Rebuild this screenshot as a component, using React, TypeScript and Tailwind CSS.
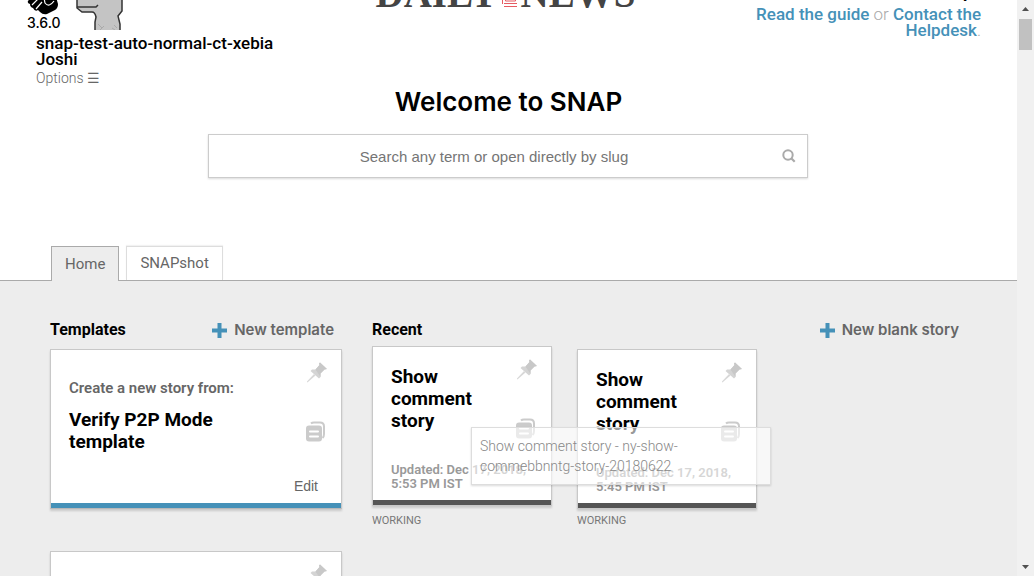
function PinIcon() {
  return (
    <svg viewBox="0 0 22 22" className="h-[22px] w-[22px]" aria-hidden="true">
      <path d="M14 1.500 21 8 18.500 8.500 14.500 12.500 14.500 16 13 17.500 4.500 10 6 8.500 9.500 8.500 13.500 4 13 2.500Z" fill="#d4d4d4" />
      <path d="M14 1.500 21 8 18.500 8.500 14.500 12.500 14.500 16 9.500 8.500 13.500 4 13 2.500Z" fill="#c8c8c8" />
      <path d="M8 13 1 20.500V21.500L2 21 9.500 14.500Z" fill="#d8d8d8" />
    </svg>
  );
}

function CopyIcon() {
  return (
    <svg viewBox="0 0 20 21" className="h-[21px] w-5" aria-hidden="true">
      <path d="M5 2.500Q6 1.500 8 1.500H14Q18 1.500 18 5.500V13Q18 16 16.500 17" fill="none" stroke="#cbcbcb" strokeWidth="2" />
      <rect x="0" y="4.500" width="16" height="16" rx="3" fill="#cbcbcb" />
      <path d="M4 10.500H12M4 15.500H12" stroke="#fff" strokeWidth="2" strokeLinecap="round" />
    </svg>
  );
}

function PlusIcon() {
  return (
    <svg viewBox="0 0 15 15" className="h-[15px] w-[15px]" aria-hidden="true">
      <path d="M7.500 2V13M2 7.500H13" stroke="#4591b8" strokeWidth="4" strokeLinecap="square" />
    </svg>
  );
}

function SearchIcon() {
  return (
    <svg viewBox="0 0 14 14" className="h-3.5 w-3.5 shrink-0" aria-hidden="true">
      <circle cx="6" cy="6" r="4.700" fill="none" stroke="#aaa" strokeWidth="2" />
      <path d="M9.500 9.500 12.700 12.700" stroke="#aaa" strokeWidth="2.200" />
    </svg>
  );
}

function CardActions() {
  return (
    <div className="flex flex-col items-center gap-[38px]">
      <button aria-label="Pin"><PinIcon /></button>
      <button aria-label="Duplicate" className="pr-0.5"><CopyIcon /></button>
    </div>
  );
}

function TemplateCard() {
  return (
    <article className="flex h-40 flex-col border border-[#c8c8c8] border-b-[#b8b8b8] bg-white shadow-[0_2px_2px_rgba(0,0,0,0.15)]">
      <div className="flex flex-1 justify-between pt-[11px] pr-[13px] pl-[18px]">
        <div className="pt-[19px]">
          <p className="text-[15px] leading-4 font-semibold text-[#666]">Create a new story from:</p>
          <h3 className="mt-[13px] w-40 text-[19px] leading-[22px] font-bold">Verify P2P Mode template</h3>
        </div>
        <div className="flex flex-col items-end">
          <CardActions />
          <a href="#edit" className="mt-9 mr-2.5 font-['Liberation_Sans',sans-serif] text-sm leading-4 text-[#666]">Edit</a>
        </div>
      </div>
      <div className="h-[5px] bg-[#4591b8]" />
    </article>
  );
}

function StoryCard({ updated, tip }: { updated: string; tip?: string }) {
  return (
    <div className="w-[180px]">
      <div className={tip ? "relative z-10 -translate-y-[3px]" : "relative"}>
        <article className="flex h-40 flex-col border border-[#c8c8c8] bg-white shadow-[0_2px_2px_rgba(0,0,0,0.15)]">
          <div className="flex justify-between pt-[11px] pr-[13px] pl-[18px]">
            <h3 className="w-24 pt-2 text-[19px] leading-[22px] font-bold">Show comment story</h3>
            <CardActions />
          </div>
          <p className="mt-auto mb-[9px] pr-2 pl-[18px] text-[13px] leading-[14px] font-semibold text-[#999]">{updated}</p>
          <div className="h-[5px] bg-[#555]" />
        </article>
        {tip && (
          <div role="tooltip" className="absolute top-[81px] left-[99px] w-[300px] border border-[#ddd] bg-white/60 px-2 py-2 text-sm leading-5 font-light text-[#888] shadow-[0_1px_2px_rgba(0,0,0,0.15)]">
            {tip}
          </div>
        )}
      </div>
      <p className="mt-1 text-[11px] leading-4 text-[#777]">WORKING</p>
    </div>
  );
}

function NewButton({ label }: { label: string }) {
  return (
    <button className="flex items-center gap-[7px] font-['Inter',sans-serif] text-[15px] leading-4 font-semibold text-[#666]">
      <PlusIcon />
      {label}
    </button>
  );
}

function Header() {
  return (
    <header className="-mt-4 grid h-[104px] shrink-0 grid-cols-[1fr_auto_1fr]">
      <div className="pl-[27px]">
        <div className="flex gap-3">
          <div className="w-9">
            <svg viewBox="0 0 34 31" className="h-[31px] w-[34px]" aria-label="SNAP">
              <path d="M1 17 5 12 27 6 31 20Q31 24 28 26L20 30Q16 31 13 28L11 26Q8 28 6 24Q3 23 3 20Q0 19 1 17Z" fill="#000" />
              <path d="M5 21 11 15M9 25 15 18M17 14 18 19Q22 24 27 17" stroke="#fff" strokeWidth="1.200" fill="none" />
            </svg>
            <p className="font-['Inter',sans-serif] text-sm leading-4 font-medium">3.6.0</p>
          </div>
          <svg viewBox="0 0 50 46" className="h-[46px] w-[50px]" aria-label="Profile">
            <path d="M20 46V38L21 33Q20 28 17 28H7L2 24V12H47V27L43 32L45 40V46Z" fill="#c4c4c4" />
            <path d="M20 46V38L21 33Q20 28 17 28H7L2 24V12M47 12V27L43 32L45 40V46" stroke="#333" strokeWidth="1.500" fill="none" />
            <path d="M2 23H21L23 21" stroke="#333" strokeWidth="1.500" fill="none" />
            <path d="M23 40 27 44M25 46 29 42M39 41 42 44M37 44 40 46" stroke="#aaa" strokeWidth="1" />
          </svg>
        </div>
        <p className="mt-1 pl-[9px] text-[17px] leading-4 font-medium">snap-test-auto-normal-ct-xebia<br />Joshi</p>
        <button className="mt-[3px] ml-[9px] flex items-center gap-[3px] text-sm leading-4 font-light text-[#666]">Options <span>☰</span></button>
      </div>
      <div className="-mt-2 flex h-10 items-end gap-[3px] pr-1.5 font-['Liberation_Serif',serif] text-[39px] leading-[44px] font-bold text-[#444]">
        DAILY
        <svg viewBox="0 0 17 30" className="mb-2 h-[30px] w-[17px]" aria-hidden="true">
          <path d="M1.500 10V26M4.500 10V23H14.500V10M3 25.500H16M3 28.500H16" stroke="#e65b62" strokeWidth="1" fill="none" />
        </svg>
        NEWS
      </div>
      <div className="flex flex-col items-end pr-9 text-right text-[17px] leading-4 text-[#aaa]">
        <p className="mb-1.5 font-bold text-black">Need help?</p>
        <p className="w-[240px] font-light"><a href="#guide" className="font-medium text-[#4591b8]">Read the guide</a> or <a href="#helpdesk" className="font-medium text-[#4591b8]">Contact the Helpdesk</a>.</p>
      </div>
    </header>
  );
}

function Scrollbar() {
  return (
    <div className="flex w-[17px] shrink-0 flex-col items-center justify-between bg-[#f1f1f1] py-[7px]" aria-hidden="true">
      <div className="flex flex-col items-center gap-2">
        <svg viewBox="0 0 7 4" className="h-1 w-[7px]"><path d="M0 4 3.500 0 7 4Z" fill="#505050" /></svg>
        <div className="h-[31px] w-[13px] bg-[#c1c1c1]" />
      </div>
      <svg viewBox="0 0 7 4" className="h-1 w-[7px]"><path d="M0 0 3.500 4 7 0Z" fill="#505050" /></svg>
    </div>
  );
}

export default function App() {
  return (
    <div className="flex h-screen overflow-hidden bg-white font-['Roboto',sans-serif] text-base text-black">
      <div className="flex min-w-0 flex-1 flex-col overflow-hidden">
        <Header />
        <section className="flex shrink-0 flex-col items-center pr-[22px] pl-5">
          <h1 className="pl-0.5 font-['Inter',sans-serif] text-[26px] leading-7 font-semibold">Welcome to SNAP</h1>
          <label className="mt-[18px] flex h-11 w-full max-w-[600px] items-center border border-[#ccc] pr-[11px] pl-3 shadow-[0_1px_2px_rgba(0,0,0,0.15)]">
            <span className="sr-only">Search</span>
            <input type="search" placeholder="Search any term or open directly by slug" className="h-full min-w-0 flex-1 text-center font-['Liberation_Sans',sans-serif] text-[15px] outline-none placeholder:text-[#757575]" />
            <SearchIcon />
          </label>
        </section>
        <nav className="mt-[68px] flex shrink-0 items-end gap-[7px] border-b border-[#aaa] pl-[51px] text-[15px] text-[#666]">
          <a href="#home" className="-mb-px flex h-[35px] items-center border border-b-0 border-[#aaa] bg-[#ededed] px-[13px]">Home</a>
          <a href="#snapshot" className="flex h-[34px] items-center border border-b-0 border-[#ddd] px-[13px] shadow-[0_-1px_1px_rgba(0,0,0,0.05)]">SNAPshot</a>
        </nav>
        <main className="grid flex-1 grid-cols-[292px_1fr] gap-[30px] bg-[#ededed] pt-[41px] pr-[58px] pl-[50px]">
          <section>
            <div className="flex h-[27px] items-start justify-between pr-2">
              <h2 className="leading-4 font-bold">Templates</h2>
              <NewButton label="New template" />
            </div>
            <div className="flex flex-col gap-[42px]">
              <TemplateCard />
              <TemplateCard />
            </div>
          </section>
          <section>
            <div className="flex h-[27px] items-start justify-between">
              <h2 className="leading-4 font-bold">Recent</h2>
              <NewButton label="New blank story" />
            </div>
            <div className="flex gap-[25px]">
              <StoryCard updated="Updated: Dec 17, 2018, 5:53 PM IST" tip="Show comment story - ny-show-commebbnntg-story-20180622" />
              <StoryCard updated="Updated: Dec 17, 2018, 5:45 PM IST" />
            </div>
          </section>
        </main>
      </div>
      <Scrollbar />
    </div>
  );
}
